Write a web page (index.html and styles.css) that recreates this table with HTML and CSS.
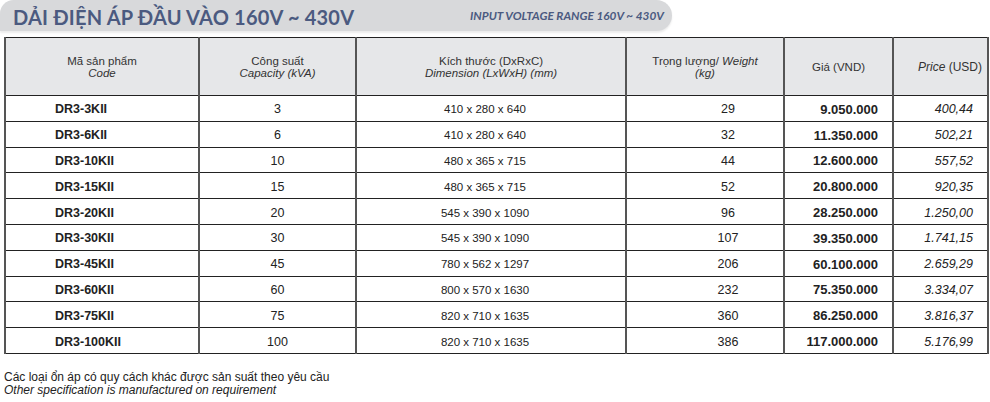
FILE: index.html
```html
<!DOCTYPE html>
<html lang="vi">
<head>
<meta charset="utf-8">
<link rel="stylesheet" href="styles.css">
</head>
<body>
<div class="banner">
  <span class="title">DẢI ĐIỆN ÁP ĐẦU VÀO 160V ~ 430V</span>
  <span class="subtitle">INPUT VOLTAGE RANGE 160V ~ 430V</span>
</div>
<table class="prices">
  <colgroup>
    <col class="c1"><col class="c2"><col class="c3"><col class="c4"><col class="c5"><col class="c6">
  </colgroup>
  <thead>
    <tr>
      <th>Mã sản phẩm<br><i>Code</i></th>
      <th>Công suất<br><i>Capacity (kVA)</i></th>
      <th>Kích thước (DxRxC)<br><i>Dimension (LxWxH) (mm)</i></th>
      <th>Trọng lượng/ <i>Weight</i><br><i>(kg)</i></th>
      <th>Giá (VND)</th>
      <th class="usdh"><i>Price</i> (USD)</th>
    </tr>
  </thead>
  <tbody>
    <tr><td class="code">DR3-3KII</td><td class="cap">3</td><td class="dim">410 x 280 x 640</td><td class="wt">29</td><td class="vnd">9.050.000</td><td class="usd">400,44</td></tr>
    <tr><td class="code">DR3-6KII</td><td class="cap">6</td><td class="dim">410 x 280 x 640</td><td class="wt">32</td><td class="vnd">11.350.000</td><td class="usd">502,21</td></tr>
    <tr><td class="code">DR3-10KII</td><td class="cap">10</td><td class="dim">480 x 365 x 715</td><td class="wt">44</td><td class="vnd">12.600.000</td><td class="usd">557,52</td></tr>
    <tr><td class="code">DR3-15KII</td><td class="cap">15</td><td class="dim">480 x 365 x 715</td><td class="wt">52</td><td class="vnd">20.800.000</td><td class="usd">920,35</td></tr>
    <tr><td class="code">DR3-20KII</td><td class="cap">20</td><td class="dim">545 x 390 x 1090</td><td class="wt">96</td><td class="vnd">28.250.000</td><td class="usd">1.250,00</td></tr>
    <tr><td class="code">DR3-30KII</td><td class="cap">30</td><td class="dim">545 x 390 x 1090</td><td class="wt">107</td><td class="vnd">39.350.000</td><td class="usd">1.741,15</td></tr>
    <tr><td class="code">DR3-45KII</td><td class="cap">45</td><td class="dim">780 x 562 x 1297</td><td class="wt">206</td><td class="vnd">60.100.000</td><td class="usd">2.659,29</td></tr>
    <tr><td class="code">DR3-60KII</td><td class="cap">60</td><td class="dim">800 x 570 x 1630</td><td class="wt">232</td><td class="vnd">75.350.000</td><td class="usd">3.334,07</td></tr>
    <tr><td class="code">DR3-75KII</td><td class="cap">75</td><td class="dim">820 x 710 x 1635</td><td class="wt">360</td><td class="vnd">86.250.000</td><td class="usd">3.816,37</td></tr>
    <tr><td class="code">DR3-100KII</td><td class="cap">100</td><td class="dim">820 x 710 x 1635</td><td class="wt">386</td><td class="vnd">117.000.000</td><td class="usd">5.176,99</td></tr>
  </tbody>
</table>
<div class="note">
  <div>Các loại ổn áp có quy cách khác được sản suất theo yêu cầu</div>
  <div><i>Other specification is manufactured on requirement</i></div>
</div>
</body>
</html>
```
FILE: styles.css
```css
html, body {
  margin: 0;
  padding: 0;
  background: #ffffff;
}
body {
  font-family: "Liberation Sans", Arial, sans-serif;
  color: #1a1a1a;
  width: 990px;
  height: 402px;
  overflow: hidden;
}
.banner {
  width: 672px;
  height: 31px;
  background: #d8d9db;
  border-radius: 14px 16px 16px 0;
  box-shadow: 0 2px 2px rgba(0,0,0,0.08);
  display: flex;
  align-items: center;
  box-sizing: border-box;
  padding-left: 13px;
  color: #4b5a80;
}
.title {
  font-family: "Lato", "DejaVu Sans", sans-serif;
  font-weight: 700;
  font-size: 20px;
  letter-spacing: 0.2px;
  width: 457px;
  white-space: nowrap;
  padding-top: 2px;
}
.subtitle {
  font-family: "Lato", "DejaVu Sans", sans-serif;
  font-weight: 700;
  font-style: italic;
  font-size: 11.8px;
  white-space: nowrap;
}
.prices {
  margin: 6px 0 0 4px;
  border-collapse: collapse;
  table-layout: fixed;
  width: 983px;
}
.c1 { width: 194px; }
.c2 { width: 157px; }
.c3 { width: 270px; }
.c4 { width: 158px; }
.c5 { width: 109px; }
.c6 { width: 95px; }
.prices th, .prices td {
  border-top: 1px solid #222;
  border-bottom: 1px solid #222;
  border-left: 2px solid #555;
  border-right: 2px solid #555;
  padding: 0;
}
.prices th {
  background: #e6e7e9;
  height: 57px;
  font-weight: 400;
  font-size: 11.5px;
  line-height: 12px;
  color: #333;
  text-align: center;
  vertical-align: middle;
}
.prices th.usdh { font-size: 12px; text-align: right; padding-right: 5px; }
.prices td {
  height: 22.8px;
  font-size: 12.5px;
  color: #222;
  vertical-align: middle;
  padding-top: 2px;
}
.code { font-weight: 700; padding-left: 49px !important; }
.cap { text-align: center; }
.dim { text-align: center; font-size: 11.5px !important; padding-right: 12px !important; }
.wt { text-align: center; padding-left: 46px !important; }
.vnd { text-align: right; font-weight: 700; font-size: 13px !important; padding-right: 14px !important; }
.usd { text-align: right; font-style: italic; padding-right: 14px !important; }
.note {
  margin: 17px 0 0 4px;
  font-size: 12px;
  line-height: 13px;
  color: #222;
}
```
